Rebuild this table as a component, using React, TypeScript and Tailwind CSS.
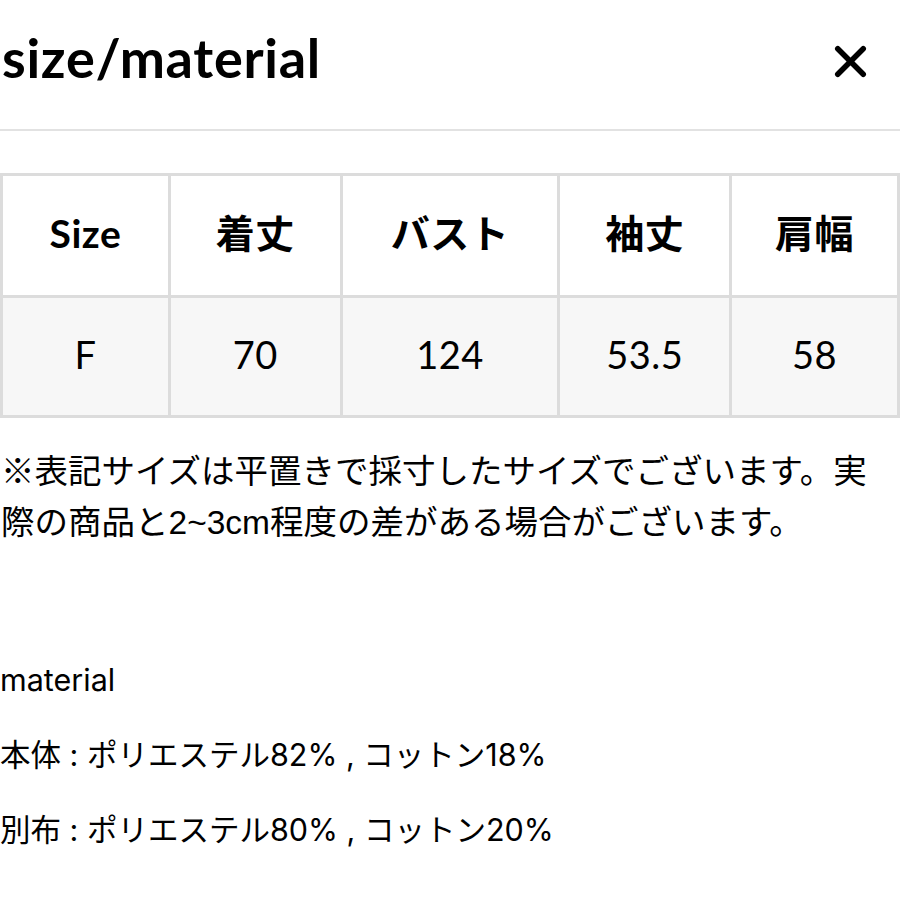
import { X } from 'lucide-react';

const headers = ['Size', '着丈', 'バスト', '袖丈', '肩幅'];
const values = ['F', '70', '124', '53.5', '58'];
const widths = ['w-[168px]', 'w-[172px]', 'w-[218px]', 'w-[172px]', 'w-[168px]'];

export default function App() {
    return (
        <div className="min-h-screen bg-white text-black font-['Lato','Noto_Sans_CJK_JP',sans-serif]">
            {/* Header */}
            <div className="flex h-[131px] items-start justify-between border-b-2 border-[#e2e2e2] pl-[2px] pr-[24px] pt-[28px]">
                <h1 className="text-[54px] font-bold leading-[60px] tracking-[0.7px]">size/material</h1>
                <button className="mt-[8px] text-black">
                    <X className="h-[51px] w-[51px]" strokeWidth={2.6} />
                </button>
            </div>

            {/* Size table */}
            <table className="mt-[42px] table-fixed border-collapse">
                <thead>
                    <tr className="h-[122px] bg-white">
                        {headers.map((h, i) => (
                            <th
                                key={h}
                                className={`${widths[i]} border-[3px] border-[#dcdcdc] pb-[4px] text-center text-[39px] font-bold tracking-[0.5px]`}
                            >
                                {h}
                            </th>
                        ))}
                    </tr>
                </thead>
                <tbody>
                    <tr className="h-[120px] bg-[#f7f7f7]">
                        {values.map(v => (
                            <td
                                key={v}
                                className="border-[3px] border-[#dcdcdc] pb-[4px] text-center text-[38px] font-normal tracking-[0.5px]"
                            >
                                {v}
                            </td>
                        ))}
                    </tr>
                </tbody>
            </table>

            {/* Note */}
            <p className="mt-[28px] pl-[1px] pr-[10px] text-[33.5px] leading-[51px] font-['Liberation_Sans','Noto_Sans_CJK_JP',sans-serif]">
                ※表記サイズは平置きで採寸したサイズでございます。実際の商品と2~3cm程度の差がある場合がございます。
            </p>

            {/* Material */}
            <div className="mt-[112px] flex flex-col gap-[35px] text-[30.5px] leading-[40px] font-['Inter','Noto_Sans_CJK_JP',sans-serif]">
                <p>material</p>
                <p>本体 : ポリエステル82% , コットン18%</p>
                <p>別布 : ポリエステル80% , コットン20%</p>
            </div>
        </div>
    );
}
